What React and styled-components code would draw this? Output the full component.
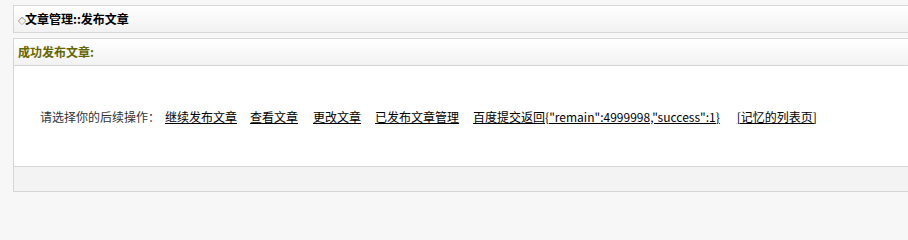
import React from 'react'
import styled, { createGlobalStyle } from 'styled-components'

const GlobalStyle = createGlobalStyle`
  html, body {
    margin: 0;
    padding: 0;
    background: #f7f7f7;
    overflow: hidden;
  }
  body {
    font-family: "Noto Sans CJK SC", "Noto Sans", sans-serif;
    font-size: 12px;
    color: #333;
  }
`

const Page = styled.div`
  padding: 5px 0 0 13px;
`

const TitleBar = styled.div`
  height: 26px;
  line-height: 26px;
  padding-left: 4px;
  margin-right: -20px;
  margin-bottom: 5px;
  border: 1px solid #d6d6d6;
  background: linear-gradient(to bottom, #ffffff, #f2f2f2);
  font-weight: bold;
  color: #000;
`

const Diamond = styled.span`
  display: inline-block;
  width: 7px;
  font-size: 8px;
  line-height: 1;
  font-weight: normal;
`

const Panel = styled.div`
  margin-right: -20px;
  border: 1px solid #d6d6d6;
`

const PanelHeader = styled.div`
  height: 26px;
  line-height: 26px;
  padding-left: 4px;
  border-bottom: 1px solid #d6d6d6;
  background: linear-gradient(to bottom, #ffffff, #f2f2f2);
  font-weight: bold;
  color: #666600;
`

const PanelBody = styled.div`
  height: 100px;
  display: flex;
  align-items: center;
  padding-left: 26px;
  background: #fff;
  border-bottom: 1px solid #d6d6d6;
  white-space: nowrap;
`

const PanelFooter = styled.div`
  height: 24px;
  background: #f3f3f3;
`

const Action = styled.a`
  color: #000;
  text-decoration: underline;
  margin-left: ${(p) => p.$gap || 14}px;
  cursor: pointer;
`

const actions = [
  { label: '继续发布文章', gap: 5 },
  { label: '查看文章', gap: 13 },
  { label: '更改文章', gap: 15 },
  { label: '已发布文章管理', gap: 14 },
  { label: '百度提交返回{"remain":4999998,"success":1}', gap: 14 },
  { label: '[记忆的列表页]', gap: 17 },
]

export default function App() {
  return (
    <Page>
      <GlobalStyle />
      <TitleBar><Diamond>◇</Diamond>文章管理::发布文章</TitleBar>
      <Panel>
        <PanelHeader>成功发布文章:</PanelHeader>
        <PanelBody>
          请选择你的后续操作：
          {actions.map((a) => (
            <Action key={a.label} $gap={a.gap}>{a.label}</Action>
          ))}
        </PanelBody>
        <PanelFooter />
      </Panel>
    </Page>
  )
}
